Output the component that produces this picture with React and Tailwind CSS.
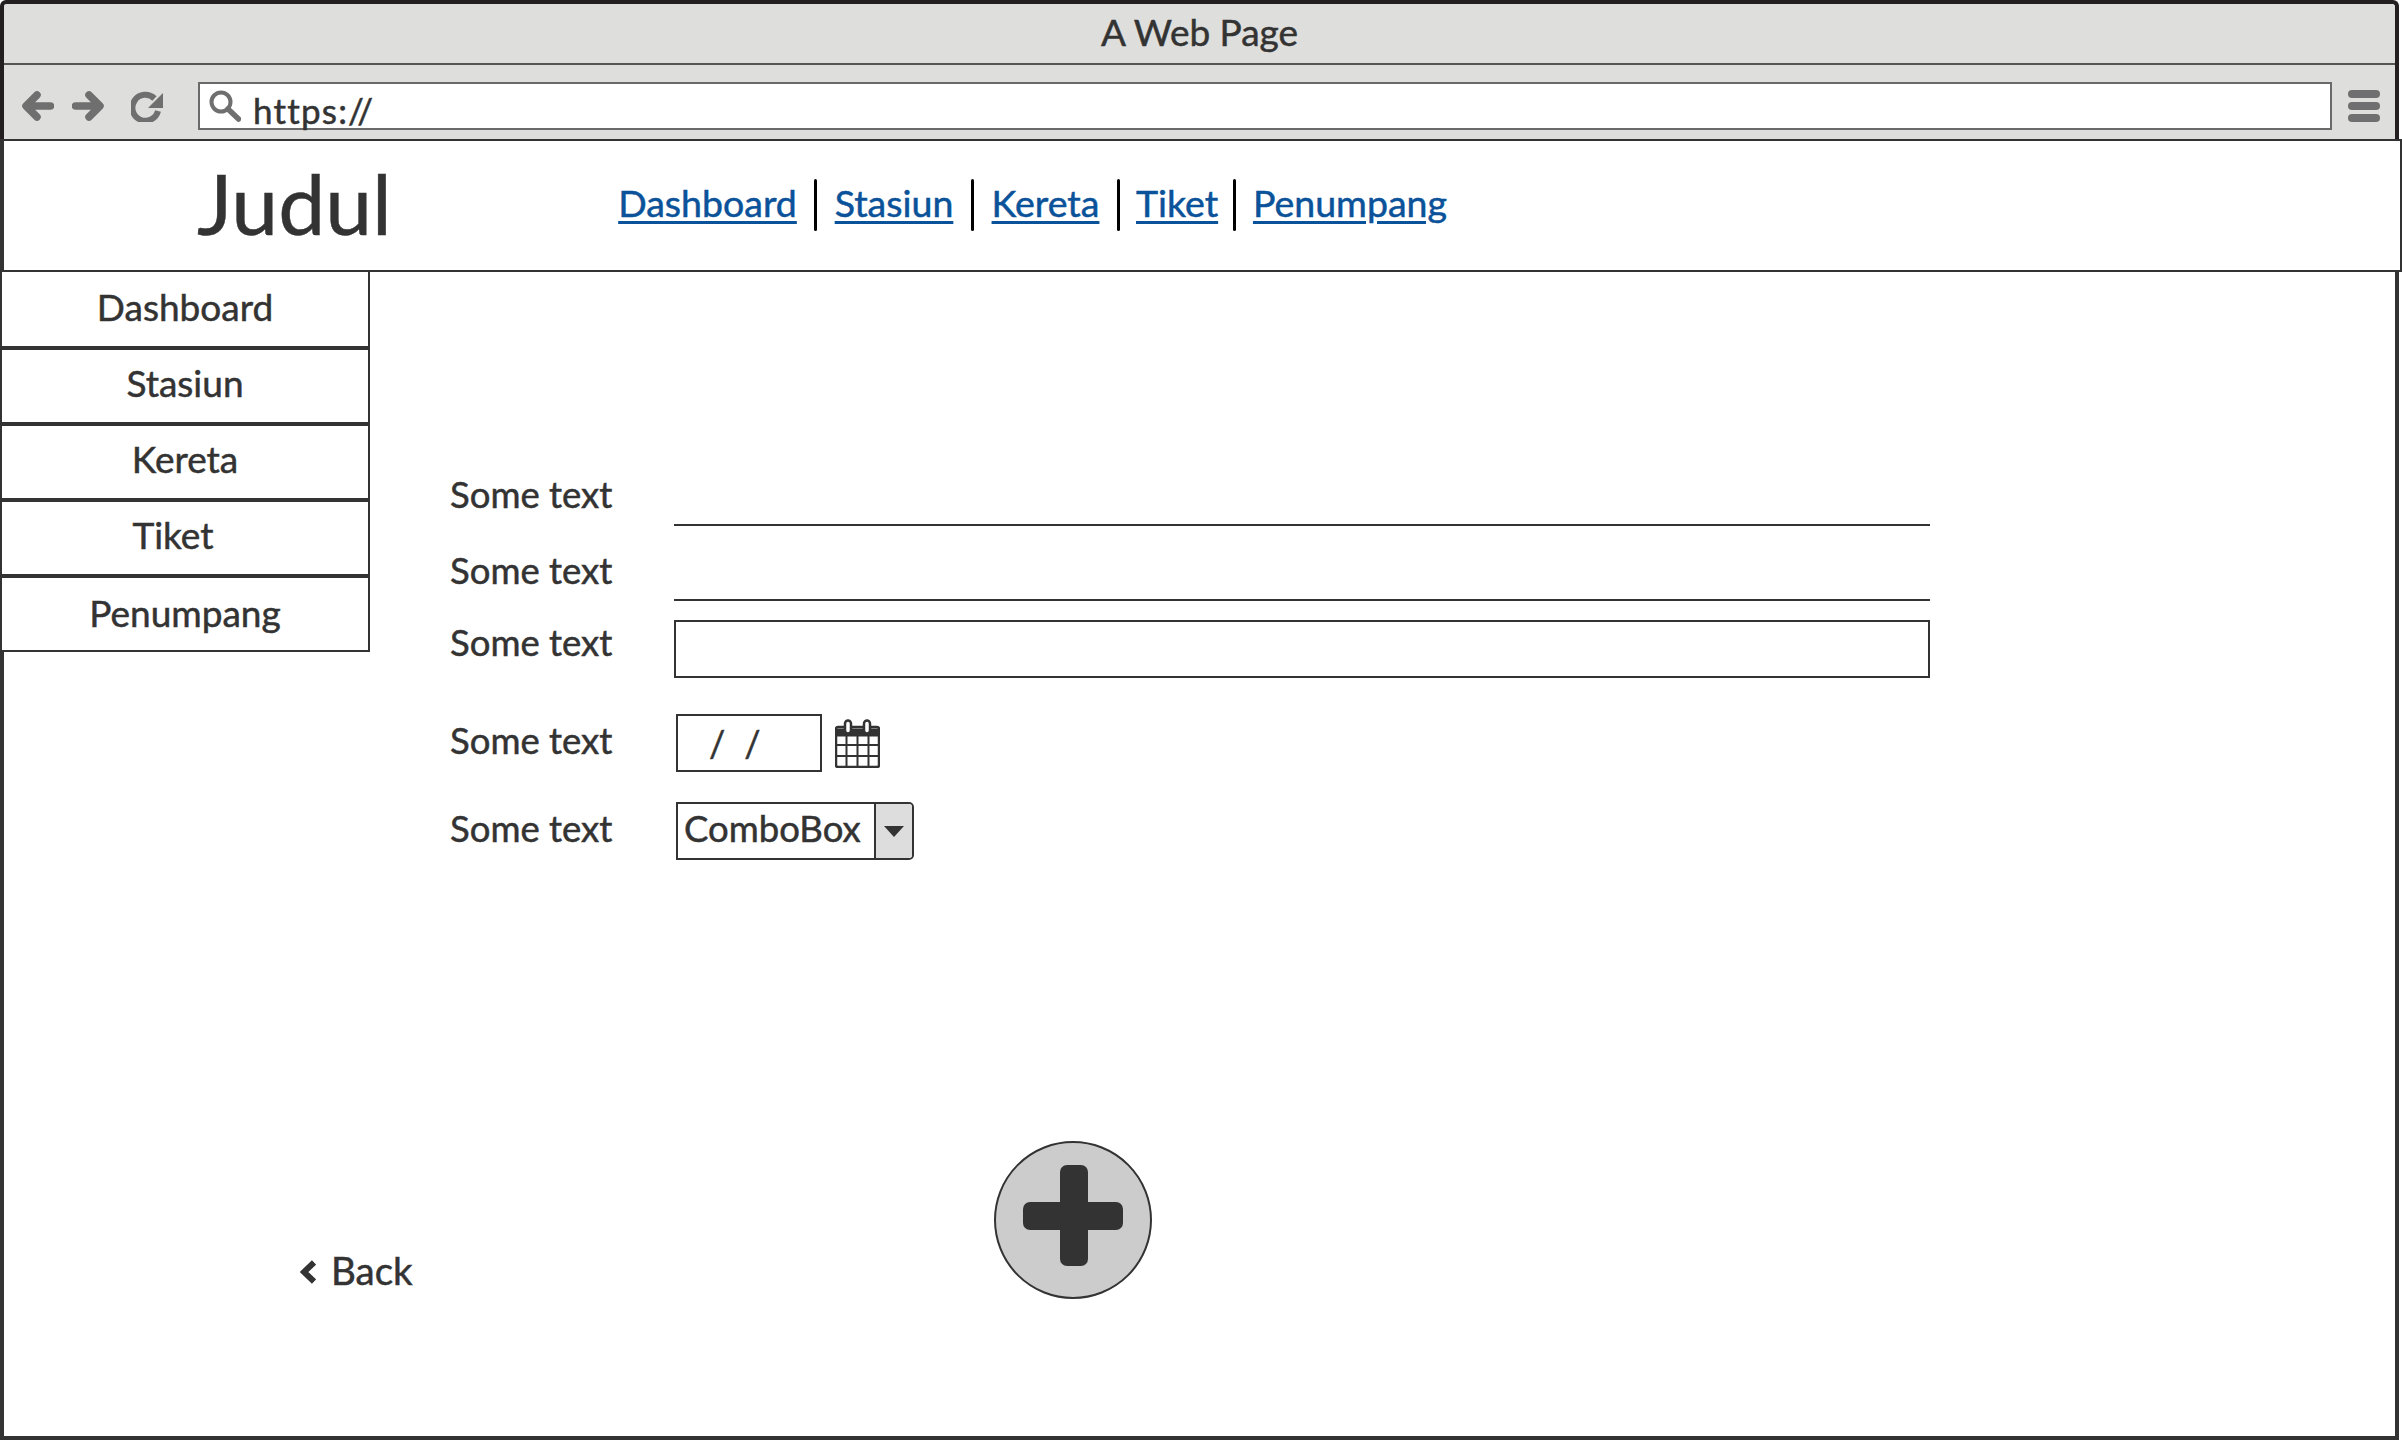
const FONT = "font-['Lato','Noto_Sans',sans-serif]";

const topLinks = [
  { label: "Dashboard", width: "w-[181px]" },
  { label: "Stasiun", width: "w-[122px]" },
  { label: "Kereta", width: "w-[111px]" },
  { label: "Tiket", width: "w-[81px]" },
  { label: "Penumpang", width: "w-[196px]" },
];

const sideItems = [
  { label: "Dashboard", lift: "mb-[5px]" },
  { label: "Stasiun", lift: "mb-[6px]" },
  { label: "Kereta", lift: "mb-[6px]" },
  { label: "Tiket", lift: "mb-[6px]" },
  { label: "Penumpang", lift: "mb-[7px]" },
];

function BackIcon() {
  return (
    <svg width="32" height="32" viewBox="0 0 32 32" fill="none" stroke="#6f6f6f" strokeWidth="7.5" strokeLinecap="round" strokeLinejoin="round">
      <path d="M28.5 16H5M15 5L4 16l11 11" />
    </svg>
  );
}

function ForwardIcon() {
  return (
    <svg width="32" height="32" viewBox="0 0 32 32" fill="none" stroke="#6f6f6f" strokeWidth="7.5" strokeLinecap="round" strokeLinejoin="round">
      <path d="M3.5 16H27M17 5l11 11-11 11" />
    </svg>
  );
}

function ReloadIcon() {
  return (
    <svg width="32" height="32" viewBox="0 0 32 32" fill="none">
      <path d="M23.5 8.5A13 13 0 1 0 27 21" stroke="#6f6f6f" strokeWidth="6" />
      <path d="M32 3v15H17z" fill="#6f6f6f" />
    </svg>
  );
}

function SearchIcon() {
  return (
    <svg width="32" height="32" viewBox="0 0 32 32" fill="none" stroke="#6f6f6f" strokeLinecap="round">
      <circle cx="12" cy="12" r="9.5" strokeWidth="4" />
      <path d="M19 19l10.5 10" strokeWidth="5.5" />
    </svg>
  );
}

function CalendarIcon() {
  return (
    <svg width="45" height="49" viewBox="0 0 45 49" fill="none" stroke="#333333">
      <rect x="1" y="8" width="43" height="40" rx="2" strokeWidth="2.5" />
      <path d="M1 10h43v7H1z" fill="#333333" strokeWidth="1" />
      <rect x="10" y="1.5" width="6" height="13" rx="3" fill="#ffffff" strokeWidth="2.5" />
      <rect x="29" y="1.5" width="6" height="13" rx="3" fill="#ffffff" strokeWidth="2.5" />
      <path d="M11.5 17v30M22.5 17v30M33.5 17v30M1 26h43M1 37h43" strokeWidth="2" />
    </svg>
  );
}

function PlusCircle() {
  return (
    <div className="flex h-[158px] w-[158px] items-center justify-center rounded-full border-2 border-[#333333] bg-[#cccccc]">
      <svg className="mb-[10px]" width="100" height="101" viewBox="0 0 100 101" fill="#333333">
        <rect x="37" y="0" width="28" height="101" rx="7" />
        <rect x="0" y="37" width="100" height="28" rx="7" />
      </svg>
    </div>
  );
}

function Label({ className = "" }) {
  return <div className={`w-[224px] shrink-0 text-[36.5px] leading-none text-[#333333] ${className}`}>Some text</div>;
}

export default function App() {
  return (
    <div className={`flex h-screen w-full flex-col overflow-hidden bg-white [-webkit-text-stroke-width:0.5px] ${FONT}`}>
      {/* BROWSER BAR */}
      <div className="mr-[3px] rounded-t-[6px] border-x-4 border-t-4 border-[#231f20] bg-[#dededc]">
        <div className="flex h-[61px] items-center justify-center border-b-2 border-[#555555] pb-[4px] text-[37px] text-[#333333]">
          A Web Page
        </div>
        <div className="flex h-[74px] items-center pl-[18px] pt-[8px]">
          <BackIcon />
          <div className="w-[18px]" />
          <ForwardIcon />
          <div className="w-[27px]" />
          <ReloadIcon />
          <div className="ml-[35px] flex h-[48px] w-[2134px] items-center border-2 border-[#6a6a6a] bg-white pl-[9px]">
            <SearchIcon />
            <span className="ml-[12px] mt-[9px] text-[35px] leading-none tracking-[1.2px] text-[#333333]">https://</span>
          </div>
          <div className="ml-[16px] flex flex-col gap-[4px]">
            <div className="h-[8px] w-[32px] rounded-full bg-[#6f6f6f]" />
            <div className="h-[8px] w-[32px] rounded-full bg-[#6f6f6f]" />
            <div className="h-[8px] w-[32px] rounded-full bg-[#6f6f6f]" />
          </div>
        </div>
      </div>

      {/* HEADER */}
      <div className="flex h-[133px] shrink-0 items-center border-y-2 border-r-2 border-l-4 border-[#333333] bg-white">
        <div className="mb-[6px] ml-[193px] w-[420px] text-[84px] leading-none text-[#333333]">Judul</div>
        <div className="mb-[6px] flex items-center">
          {topLinks.map((link, i) => (
            <div key={link.label} className="flex items-center">
              {i > 0 && <div className="mx-4 mt-[4px] h-[52px] w-[3px] rounded-full bg-black" />}
              <a className={`${link.width} whitespace-nowrap text-center text-[37.5px] leading-none text-[#0a5299] underline underline-offset-4`}>
                {link.label}
              </a>
            </div>
          ))}
        </div>
      </div>

      {/* BODY */}
      <div className="mr-[3px] flex flex-1 flex-col border-x-4 border-b-4 border-[#333333]">
        <div className="flex">
          <div className="-ml-1 h-[380px] w-[370px] shrink-0 border-x-2 border-b-2 border-[#333333] bg-white">
            {sideItems.map((item, i) => (
              <div
                key={item.label}
                className={`flex items-center justify-center text-[37px] text-[#333333] ${i === 0 ? "h-[78px]" : "h-[76px]"} ${i < 4 ? "border-b-4 border-[#333333]" : ""} ${item.label === "Tiket" ? "pr-6" : ""}`}
              >
                <span className={item.lift}>{item.label}</span>
              </div>
            ))}
          </div>

          {/* FORM */}
          <div className="ml-[80px] pt-[193px]">
            <div className="flex h-[61px] items-center">
              <Label className="mb-[3px]" />
              <div className="h-full w-[1256px] border-b-2 border-[#333333]" />
            </div>
            <div className="mt-[17px] flex h-[58px] items-center">
              <Label className="mb-[4px]" />
              <div className="h-full w-[1256px] border-b-2 border-[#333333]" />
            </div>
            <div className="mt-[19px] flex h-[58px] items-center">
              <Label className="mb-[13px]" />
              <div className="h-full w-[1256px] border-2 border-[#333333]" />
            </div>
            <div className="mt-[36px] flex h-[58px] items-center">
              <Label className="mb-[5px]" />
              <div className="ml-[2px] flex h-full w-[146px] items-center border-2 border-[#333333] pl-[31px] text-[36px] text-[#333333]">
                /<span className="ml-[19px]">/</span>
              </div>
              <div className="ml-[13px]">
                <CalendarIcon />
              </div>
            </div>
            <div className="mt-[30px] flex h-[58px] items-center">
              <Label className="mb-[5px]" />
              <div className="ml-[2px] flex h-full w-[238px] overflow-hidden rounded-r-[5px] border-2 border-[#333333]">
                <div className="flex w-[198px] items-center border-r-2 border-[#333333] pb-[5px] pl-[6px] text-[36.5px] text-[#333333]">
                  ComboBox
                </div>
                <div className="flex flex-1 items-center justify-center bg-[#dddddd]">
                  <div className="h-0 w-0 border-x-[10px] border-t-[11px] border-x-transparent border-t-[#333333]" />
                </div>
              </div>
            </div>
          </div>
        </div>

        {/* BOTTOM */}
        <div className="mt-[281px] flex items-start pl-[296px]">
          <div className="mt-[110px] flex w-[694px] items-center text-[38.5px] leading-none text-[#333333]">
            <svg className="mt-[3px]" width="16" height="24" viewBox="0 0 16 24" fill="none" stroke="#333333" strokeWidth="6" strokeLinejoin="miter">
              <path d="M14 2.5L4 12l10 9.5" />
            </svg>
            <span className="ml-[15px]">Back</span>
          </div>
          <PlusCircle />
        </div>
      </div>
    </div>
  );
}
